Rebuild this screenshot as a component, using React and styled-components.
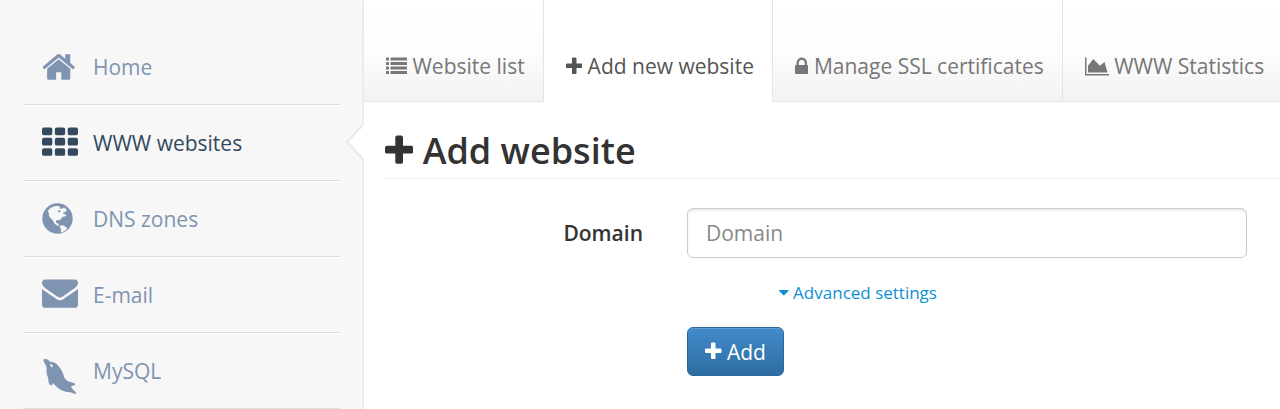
import React, { useState } from "react";
import styled, { createGlobalStyle } from "styled-components";

const paths = {
  plus: "M1600 736v192q0 40-28 68t-68 28h-416v416q0 40-28 68t-68 28h-192q-40 0-68-28t-28-68v-416h-416q-40 0-68-28t-28-68v-192q0-40 28-68t68-28h416v-416q0-40 28-68t68-28h192q40 0 68 28t28 68v416h416q40 0 68 28t28 68z",
  home: "M1472 992v480q0 26-19 45t-45 19h-384v-384h-256v384h-384q-26 0-45-19t-19-45v-480q0-1 .5-3t.5-3l575-474 575 474q1 2 1 6zm223-69l-62 74q-8 9-21 11h-3q-13 0-21-7l-692-577-692 577q-12 8-24 7-13-2-21-11l-62-74q-8-10-7-23.5t11-21.5l719-599q32-26 76-26t76 26l244 204v-195q0-14 9-23t23-9h192q14 0 23 9t9 23v408l219 182q10 8 11 21.5t-7 23.5z",
  globe: "M15.5 .3A15.2 15.2 0 0 1 15.5 30.7A15.2 15.2 0 0 1 15.5 .3ZM5.6 8.2L8 5.2L11.6 3.4L15.4 2.8L18.2 4L17.4 5.6L20 5.8L22 4.4L24.6 6.4L24.2 8.6L21.6 9.4L20.8 10.8L23.8 11.6L24.2 13L20.6 14L18.4 16.6L17 17.4L16.2 16.8L14.2 17.6L13.8 19.6L15.6 20L16.4 21.6L18 22.4L15.6 22.8L12.4 20.6L10.8 17.2L8.4 15L6.8 12.4L7 10ZM15.6 8L17.4 9.8L18.6 8L17 7ZM18.4 22.6L21.6 22.4L25.2 25L24 27L20.6 29.2L18.8 29L19 26L18 24.4Z",
  envelope: "M1792 710v794q0 66-47 113t-113 47h-1472q-66 0-113-47t-47-113v-794q44 49 101 87 362 246 497 345 57 42 92.5 65.5t94.5 48 110 24.5h2q51 0 110-24.5t94.5-48 92.5-65.5q170-123 498-345 57-39 100-87zm0-294q0 79-49 151t-122 123q-376 261-468 325-10 7-42.5 31t-54 38.5-52 32.5-57.5 27-50 9h-2q-23 0-50-9t-57.5-27-52-32.5-54-38.5-42.5-31q-91-64-262-182.5t-205-142.5q-62-42-117-115.5t-55-136.5q0-78 41.5-130t118.5-52h1472q65 0 112.5 47t47.5 113z",
  lock: "M640 768h512v-192q0-106-75-181t-181-75-181 75-75 181v192zm832 96v576q0 40-28 68t-68 28h-960q-40 0-68-28t-28-68v-576q0-40 28-68t68-28h32v-192q0-184 132-316t316-132 316 132 132 316v192h32q40 0 68 28t28 68z",
  chart: "M2048 1536v128h-2048v-1536h128v1408h1920zm-384-1024l256 896h-1664v-576l448-576 576 576z",
  caret: "M1408 704q0 26-19 45l-448 448q-19 19-45 19t-45-19l-448-448q-19-19-19-45t19-45 45-19h896q26 0 45 19t19 45z",
  dolphin: "M1.5 13.5C1.2 11.8 3.6 11.6 5.2 12.4C6.8 13 7.4 14.4 9 14.8C12 15 14.6 16.6 16.8 19.4C19.4 22.6 21 25.6 21.8 28.8C22.4 31.2 23 32.2 25 33.4C27.2 34.8 30 35.4 32.4 36.2C33.4 36.6 33.6 37.8 32.6 38.2C31.2 38.8 29 38.6 29 39.8C29.4 41.8 33 43.6 34 45.8C34.4 47 33.4 47.4 32.2 46.8C29.4 45.2 26.4 45.4 23 44.6C19 43.4 15.4 41 12.6 37.8C11.8 36.8 11 35.8 10.6 36.6C10.2 38 10 38.8 9 38.4C7 37.2 6.2 34.8 6.4 32.4C6.4 30 4.6 28.4 4.6 25.4C4.4 22 5 20.4 3.8 18.2C3 16.4 1.8 15.4 1.5 13.5ZM8.2 17C8 19 9 20.4 10.8 20.2C11 18.4 10 17 8.2 17Z",
};

const viewBoxes = {
  plus: "192 0 1408 1792",
  home: "64 0 1664 1792",
  globe: "0 -2 31 36",
  envelope: "0 128 1792 1792",
  lock: "320 0 1152 1792",
  chart: "0 0 2048 1792",
  caret: "384 0 1024 1792",
  dolphin: "0 0 36 48",
};

const Icon = ({ name }) => {
  if (name === "th") {
    return (
      <Glyph viewBox="0 0 1792 1792" aria-hidden="true">
        {[128, 640, 1152].map((y) =>
          [0, 640, 1280].map((x) => (
            <rect key={`${x}-${y}`} x={x} y={y} width="512" height="384" rx="96" />
          ))
        )}
      </Glyph>
    );
  }
  if (name === "list") {
    return (
      <Glyph viewBox="0 0 1792 1792" aria-hidden="true">
        {[128, 512, 896, 1280].map((y) => (
          <g key={y}>
            <rect x="0" y={y} width="256" height="256" rx="32" />
            <rect x="384" y={y} width="1408" height="256" rx="32" />
          </g>
        ))}
      </Glyph>
    );
  }
  const cutOut = name === "dolphin" || name === "globe";
  return (
    <Glyph viewBox={viewBoxes[name]} aria-hidden="true">
      <path d={paths[name]} fillRule={cutOut ? "evenodd" : undefined} />
    </Glyph>
  );
};

const menu = [
  { label: "Home", icon: "home" },
  { label: "WWW websites", icon: "th" },
  { label: "DNS zones", icon: "globe" },
  { label: "E-mail", icon: "envelope" },
  { label: "MySQL", icon: "dolphin" },
];

const tabs = [
  { label: "Website list", icon: "list" },
  { label: "Add new website", icon: "plus" },
  { label: "Manage SSL certificates", icon: "lock" },
  { label: "WWW Statistics", icon: "chart" },
];

export default function App() {
  const [domain, setDomain] = useState("");

  return (
    <>
      <GlobalStyle />
      <Page>
        <Sidebar>
          <Menu>
            {menu.map((item) => {
              const active = item.label === "WWW websites";
              return (
                <MenuItem key={item.label}>
                  <MenuLink href="#" $active={active}>
                    <MenuIcon $tall={item.icon === "dolphin"}>
                      <Icon name={item.icon} />
                    </MenuIcon>
                    {item.label}
                  </MenuLink>
                  {active && (
                    <Notch viewBox="0 0 19 34" aria-hidden="true">
                      <path d="M19 1L17 1L2 17L17 33L19 33Z" fill="#fff" />
                      <path d="M17 1L2 17L17 33" fill="none" stroke="#e3e9ed" strokeWidth="2" />
                    </Notch>
                  )}
                </MenuItem>
              );
            })}
          </Menu>
        </Sidebar>
        <Main>
          <Tabs>
            {tabs.map((tab) => (
              <Tab key={tab.label} href="#" $active={tab.label === "Add new website"}>
                <Icon name={tab.icon} /> {tab.label}
              </Tab>
            ))}
          </Tabs>
          <Content>
            <Title>
              <Icon name="plus" /> Add website
            </Title>
            <Form onSubmit={(e) => e.preventDefault()}>
              <Label htmlFor="domain">Domain</Label>
              <Input
                id="domain"
                type="text"
                placeholder="Domain"
                value={domain}
                onChange={(e) => setDomain(e.target.value)}
              />
              <Advanced>
                <AdvancedLink href="#">
                  <Icon name="caret" /> Advanced settings
                </AdvancedLink>
              </Advanced>
              <Submit type="submit">
                <Icon name="plus" /> Add
              </Submit>
            </Form>
          </Content>
        </Main>
      </Page>
    </>
  );
}

const GlobalStyle = createGlobalStyle`
  * {
    box-sizing: border-box;
  }
  body {
    margin: 0;
    background-color: #fff;
    color: #333;
    font-family: "Open Sans", "Noto Sans", sans-serif;
    font-size: 21px;
    line-height: 30px;
  }
  a {
    text-decoration: none;
  }
`;
const Glyph = styled.svg`
  height: 1em;
  width: auto;
  fill: currentColor;
  vertical-align: -0.14em;
`;
const Page = styled.div`
  display: flex;
  min-height: 100vh;
`;
const Sidebar = styled.nav`
  flex: 0 0 364px;
  padding: 29px 22px 0 23px;
  background-color: #f7f7f7;
  border-right: 2px solid #e9edf0;
`;
const Menu = styled.ul`
  margin: 0;
  padding: 0;
  list-style: none;
`;
const MenuItem = styled.li`
  position: relative;
  border-bottom: 1px solid #dedede;
  &:not(:last-child) {
    box-shadow: 0 1px 0 #fff;
  }
`;
const MenuLink = styled.a`
  display: flex;
  align-items: center;
  height: 75px;
  padding-left: 19px;
  color: ${({ $active }) => ($active ? "#34495e" : "#7f94b0")};
`;
const MenuIcon = styled.span`
  display: flex;
  width: 51px;
  font-size: ${({ $tall }) => ($tall ? "48px" : "36px")};
`;
const Notch = styled.svg`
  position: absolute;
  top: 20px;
  right: -24px;
  width: 19px;
  height: 34px;
`;
const Main = styled.main`
  flex: 1;
  min-width: 0;
`;
const Tabs = styled.nav`
  display: flex;
  overflow: hidden;
  background: linear-gradient(#fff, #fdfdfd 50%, #f2f2f2);
  box-shadow: inset 0 -1px 0 #e6e6e6;
`;
const Tab = styled.a`
  flex: none;
  padding: 51px 18px 21px 22px;
  border-right: 1px solid #dfe6eb;
  white-space: nowrap;
  color: ${({ $active }) => ($active ? "#555" : "#777")};
  background-color: ${({ $active }) => ($active ? "#fff" : "transparent")};
  &:last-child {
    border-right: none;
  }
`;
const Content = styled.div`
  padding: 24px 0 32px 21px;
`;
const Title = styled.h1`
  margin: 0 0 29px;
  padding-bottom: 2px;
  border-bottom: 1px solid #eee;
  color: #333;
  font-size: 36px;
  font-weight: 600;
  line-height: 50px;
`;
const Form = styled.form`
  display: grid;
  grid-template-columns: 258px 1fr;
  column-gap: 44px;
  align-items: center;
  padding-right: 33px;
`;
const Label = styled.label`
  font-weight: 600;
  text-align: right;
`;
const Input = styled.input`
  width: 100%;
  height: 50px;
  padding: 0 18px;
  border: 1px solid #ccc;
  border-radius: 6px;
  box-shadow: inset 0 2px 2px rgba(0, 0, 0, 0.08);
  background-color: #fff;
  color: #555;
  font: inherit;
  &::placeholder {
    color: #888;
    opacity: 1;
  }
`;
const Advanced = styled.div`
  grid-column: 2;
  padding: 20px 0 19px 92px;
  font-size: 17px;
`;
const AdvancedLink = styled.a`
  color: #0e90d2;
`;
const Submit = styled.button`
  grid-column: 2;
  justify-self: start;
  height: 49px;
  padding: 0 17px;
  border: 1px solid #2b669a;
  border-radius: 6px;
  background: linear-gradient(#428bca, #2d6ca2);
  box-shadow: inset 0 1px 0 rgba(255, 255, 255, 0.15);
  color: #fff;
  font: inherit;
  cursor: pointer;
`;
